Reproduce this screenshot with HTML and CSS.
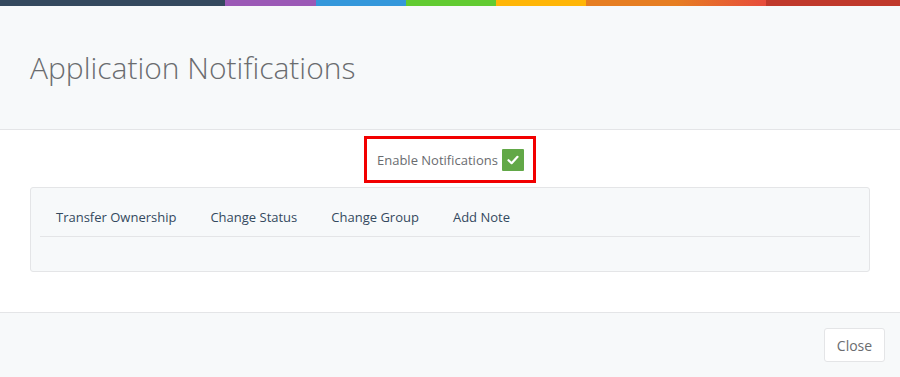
FILE: index.html
```html
<!DOCTYPE html>
<html lang="en">
<head>
    <meta charset="UTF-8">
    <title>Application Notifications</title>
    <link rel="stylesheet" href="styles.css">
</head>
<body>
    <!-- Colour strip -->
    <div class="color-line">
        <span class="c-navy"></span>
        <span class="c-purple"></span>
        <span class="c-blue"></span>
        <span class="c-green"></span>
        <span class="c-yellow"></span>
        <span class="c-orange"></span>
        <span class="c-red"></span>
    </div>

    <div class="modal-header">
        <h1>Application Notifications</h1>
    </div>

    <div class="modal-body">
        <div class="enable-row">
            <div class="highlight">
                <span>Enable Notifications</span>
                <span class="check">
                    <svg width="12" height="10" viewBox="0 0 12 10">
                        <path d="M1.5 5.2 L4.6 8.2 L10.5 1.8" fill="none" stroke="#fff" stroke-width="2.2" stroke-linecap="round" stroke-linejoin="round"/>
                    </svg>
                </span>
            </div>
        </div>

        <div class="panel">
            <ul class="tabs">
                <li>Transfer Ownership</li>
                <li>Change Status</li>
                <li>Change Group</li>
                <li>Add Note</li>
            </ul>
        </div>
    </div>

    <div class="modal-footer">
        <button class="btn-close">Close</button>
    </div>
</body>
</html>
```

FILE: styles.css
```css
/* Reset */
* {
    margin: 0;
    padding: 0;
    box-sizing: border-box;
    font-family: "Open Sans", Arial, sans-serif;
}

body {
    width: 900px;
    height: 377px;
    background-color: #fff;
    color: #6a6c6f;
    overflow: hidden;
}

/* Colour strip */
.color-line {
    display: flex;
    height: 6px;
}

.color-line span {
    display: block;
    height: 100%;
}

.c-navy { width: 225px; background-color: #34495e; }
.c-purple { width: 91px; background-color: #9b59b6; }
.c-blue { width: 90px; background-color: #3498db; }
.c-green { width: 90px; background-color: #62cb31; }
.c-yellow { width: 90px; background-color: #ffb606; }
.c-orange { width: 180px; background: linear-gradient(to right, #e67e22 50%, #e74c3c); }
.c-red { flex: 1; background-color: #c0392b; }

/* Header */
.modal-header {
    height: 124px;
    background-color: #f7f9fa;
    border-bottom: 1px solid #e4e5e7;
    padding: 42px 30px 0;
}

.modal-header h1 {
    font-size: 30px;
    font-weight: 300;
    color: #6a6c6f;
    line-height: 40px;
}

/* Body */
.modal-body {
    height: 182px;
    padding: 6px 30px 0;
}

.enable-row {
    display: flex;
    justify-content: center;
}

.highlight {
    display: flex;
    align-items: center;
    width: 172px;
    height: 47px;
    border: 3px solid #f20000;
    padding-left: 10px;
    font-size: 13px;
    color: #6a6c6f;
}

.check {
    display: flex;
    align-items: center;
    justify-content: center;
    width: 22px;
    height: 22px;
    margin-left: 4px;
    background-color: #62a847;
    border-radius: 1px;
}

.panel {
    margin-top: 4px;
    height: 85px;
    background-color: #f7f9fa;
    border: 1px solid #e4e5e7;
    border-radius: 3px;
    padding: 9px 9px 0;
}

.tabs {
    display: flex;
    list-style: none;
    border-bottom: 1px solid #e4e5e7;
    height: 40px;
}

.tabs li {
    padding: 11px 16px 0;
    margin-right: 2px;
    font-size: 13px;
    color: #34495e;
    cursor: pointer;
}

/* Footer */
.modal-footer {
    height: 65px;
    background-color: #f7f9fa;
    border-top: 1px solid #e4e5e7;
    display: flex;
    justify-content: flex-end;
    padding: 15px 15px 0;
}

.btn-close {
    width: 61px;
    height: 34px;
    background-color: #fff;
    border: 1px solid #e4e5e7;
    border-radius: 3px;
    font-size: 14px;
    color: #6a6c6f;
    cursor: pointer;
}
```
